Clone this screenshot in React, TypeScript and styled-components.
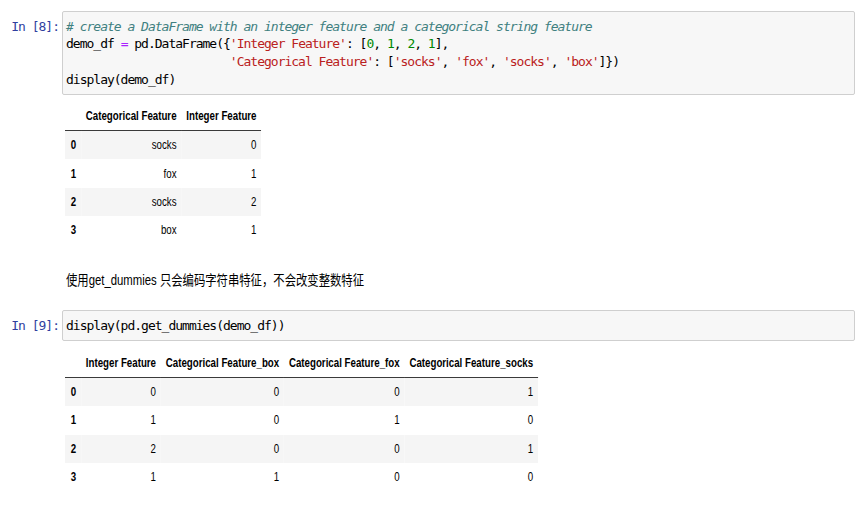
import React from "react";
import styled, { createGlobalStyle } from "styled-components";

const GlobalStyle = createGlobalStyle`
  html, body {
    margin: 0;
    padding: 0;
    background: #ffffff;
  }
`;

type Tok = { t: string; k?: "comment" | "string" | "number" | "operator" };

const code8: Tok[][] = [
  [{ t: "# create a DataFrame with an integer feature and a categorical string feature", k: "comment" }],
  [
    { t: "demo_df " },
    { t: "=", k: "operator" },
    { t: " pd.DataFrame({" },
    { t: "'Integer Feature'", k: "string" },
    { t: ": [" },
    { t: "0", k: "number" },
    { t: ", " },
    { t: "1", k: "number" },
    { t: ", " },
    { t: "2", k: "number" },
    { t: ", " },
    { t: "1", k: "number" },
    { t: "]," },
  ],
  [
    { t: "                        " },
    { t: "'Categorical Feature'", k: "string" },
    { t: ": [" },
    { t: "'socks'", k: "string" },
    { t: ", " },
    { t: "'fox'", k: "string" },
    { t: ", " },
    { t: "'socks'", k: "string" },
    { t: ", " },
    { t: "'box'", k: "string" },
    { t: "]})" },
  ],
  [{ t: "display(demo_df)" }],
];

const code9: Tok[][] = [[{ t: "display(pd.get_dummies(demo_df))" }]];

const table1 = {
  columns: ["Categorical Feature", "Integer Feature"],
  rows: [
    ["socks", "0"],
    ["fox", "1"],
    ["socks", "2"],
    ["box", "1"],
  ],
};

const table2 = {
  columns: [
    "Integer Feature",
    "Categorical Feature_box",
    "Categorical Feature_fox",
    "Categorical Feature_socks",
  ],
  rows: [
    ["0", "0", "0", "1"],
    ["1", "0", "1", "0"],
    ["2", "0", "0", "1"],
    ["1", "1", "0", "0"],
  ],
};

const CodeBlock = ({ lines }: { lines: Tok[][] }) => (
  <InputArea>
    {lines.map((line, i) => (
      <CodeLine key={i}>
        {line.map((tok, j) => (
          <Token key={j} $kind={tok.k}>
            {tok.t}
          </Token>
        ))}
      </CodeLine>
    ))}
  </InputArea>
);

const DataTable = ({ columns, rows }: { columns: string[]; rows: string[][] }) => (
  <Table>
    <thead>
      <tr>
        <HeadCell />
        {columns.map((c) => (
          <HeadCell key={c}>{c}</HeadCell>
        ))}
      </tr>
    </thead>
    <tbody>
      {rows.map((row, i) => (
        <Row key={i} $striped={i % 2 === 0}>
          <IndexCell>{i}</IndexCell>
          {row.map((v, j) => (
            <Cell key={j}>{v}</Cell>
          ))}
        </Row>
      ))}
    </tbody>
  </Table>
);

const App = () => {
  return (
    <Page>
      <GlobalStyle />
      <CodeCell>
        <Prompt>In [8]:</Prompt>
        <CodeBlock lines={code8} />
      </CodeCell>
      <Output>
        <DataTable columns={table1.columns} rows={table1.rows} />
      </Output>

      <Markdown>
        <MarkdownText>使用get_dummies 只会编码字符串特征，不会改变整数特征</MarkdownText>
      </Markdown>

      <CodeCell>
        <Prompt>In [9]:</Prompt>
        <CodeBlock lines={code9} />
      </CodeCell>
      <Output $top={8}>
        <DataTable columns={table2.columns} rows={table2.rows} />
      </Output>
    </Page>
  );
};

export default App;

const mono = `"DejaVu Sans Mono", "Liberation Mono", monospace`;
const sans = `"Liberation Sans", Arial, "Noto Sans CJK SC", sans-serif`;
// the captured notebook is squeezed horizontally
const squeeze = 0.81;

const Page = styled.div`
  padding: 11px 11px 0 0;
  width: 866px;
  box-sizing: border-box;
`;

const CodeCell = styled.div`
  display: flex;
  align-items: flex-start;
`;

const Prompt = styled.div`
  flex: none;
  width: 62px;
  box-sizing: border-box;
  padding: 6.5px 3px 0 0;
  text-align: right;
  font-family: ${mono};
  font-size: 13px;
  letter-spacing: -1px;
  line-height: 17.75px;
  color: #303f9f;
  white-space: pre;
`;

const InputArea = styled.div`
  flex: 1;
  background: #f7f7f7;
  border: 1px solid #cfcfcf;
  border-radius: 2px;
  padding: 5.5px 3px;
  font-family: ${mono};
  font-size: 13px;
  letter-spacing: -1px;
  color: #000;
`;

const CodeLine = styled.div`
  height: 17.75px;
  line-height: 17.75px;
  white-space: pre;
`;

const tokenColors = {
  comment: "#408080",
  string: "#ba2121",
  number: "#008800",
  operator: "#aa22ff",
};

const Token = styled.span<{ $kind?: keyof typeof tokenColors }>`
  color: ${({ $kind }) => ($kind ? tokenColors[$kind] : "#000")};
  font-style: ${({ $kind }) => ($kind === "comment" ? "italic" : "normal")};
`;

const Output = styled.div<{ $top?: number }>`
  padding: ${({ $top = 7 }) => $top}px 0 0 65px;
`;

const Table = styled.table`
  border-collapse: collapse;
  border-spacing: 0;
  font-family: ${sans};
  font-size: 12px;
  color: #000;
  transform: scaleX(${squeeze});
  transform-origin: 0 0;

  thead {
    border-bottom: 1px solid #3a3a3a;
  }
`;

const HeadCell = styled.th`
  height: 28px;
  padding: 0 6px;
  text-align: right;
  font-weight: bold;
  line-height: 14px;
  white-space: nowrap;
`;

const Row = styled.tr<{ $striped: boolean }>`
  background: ${({ $striped }) => ($striped ? "#f5f5f5" : "#ffffff")};
`;

const IndexCell = styled.th`
  height: 28.4px;
  padding: 0 6px 0 7px;
  text-align: left;
  font-weight: bold;
  line-height: 14px;
`;

const Cell = styled.td`
  height: 28.4px;
  padding: 0 6px;
  text-align: right;
  line-height: 14px;
  white-space: nowrap;
`;

const Markdown = styled.div`
  padding: 25.5px 0 20px 66px;
  line-height: 20px;
  height: 20px;
`;

const MarkdownText = styled.span`
  display: inline-block;
  font-family: ${sans};
  font-size: 14px;
  color: #000;
  white-space: pre;
  transform: scaleX(${squeeze});
  transform-origin: 0 0;
`;
